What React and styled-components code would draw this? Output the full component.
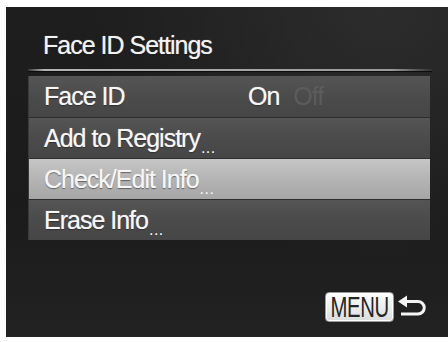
import React from "react";
import styled, { createGlobalStyle } from "styled-components";

const GlobalStyle = createGlobalStyle`
  html, body {
    margin: 0;
    padding: 0;
    background: #ffffff;
  }
  body {
    font-family: "Liberation Sans", Arial, sans-serif;
  }
`;

const items = [
  { label: "Face ID", value: true },
  { label: "Add to Registry", dots: true },
  { label: "Check/Edit Info", dots: true, selected: true },
  { label: "Erase Info", dots: true },
];

export const App = () => {
  return (
    <>
      <GlobalStyle />
      <Screen>
        <Title>
          <Text>Face ID Settings</Text>
        </Title>
        <Divider />
        <Menu>
          {items.map((item, index) => (
            <Row key={index} selected={item.selected}>
              <Label>
                <Text>{item.label}</Text>
                {item.dots && <Dots>...</Dots>}
              </Label>
              {item.value && (
                <Values>
                  <Text>On</Text>
                  <Off>Off</Off>
                </Values>
              )}
            </Row>
          ))}
        </Menu>
        <Footer>
          <MenuKey>
            <KeyText>MENU</KeyText>
          </MenuKey>
          <svg width="30" height="24" viewBox="0 0 30 24">
            <polygon points="0,6.5 9,0.5 9,12.5" fill="#f4f4f4" />
            <path
              d="M8 6.5 H20 A6.25 6.25 0 0 1 20 19 H3"
              fill="none"
              stroke="#f4f4f4"
              strokeWidth="3"
            />
          </svg>
        </Footer>
      </Screen>
    </>
  );
};

const Screen = styled.div`
  margin: 7px 0 0 6px;
  width: 442px;
  height: 330px;
  box-sizing: border-box;
  background:
    radial-gradient(ellipse at 85% 0%, #2c2c2c 0%, rgba(44, 44, 44, 0) 55%),
    linear-gradient(to bottom, #1e1e1e, #1b1b1b 60%, #222222);
  display: flex;
  flex-direction: column;
  overflow: hidden;
`;

const Title = styled.div`
  height: 62px;
  box-sizing: border-box;
  padding: 15px 0 0 37px;
  display: flex;
  align-items: center;
  color: #f2f2f2;
  font-size: 25px;
`;

const Text = styled.span`
  letter-spacing: -1px;
  text-shadow: 0 0 1px rgba(255, 255, 255, 0.6), 0 1px 1px rgba(0, 0, 0, 0.5);
`;

const Divider = styled.div`
  margin-left: 22px;
  width: 404px;
  height: 2px;
  background: linear-gradient(
    to right,
    rgba(160, 160, 160, 0.2),
    #b4b4b4 4%,
    #9a9a9a 90%,
    rgba(120, 120, 120, 0.1)
  );
  box-shadow: 0 1px 1px #0c0c0c;
`;

const Menu = styled.div`
  margin: 5px 0 0 22px;
  width: 402px;
  display: flex;
  flex-direction: column;
`;

const Row = styled.div`
  height: 41px;
  box-sizing: border-box;
  padding-left: 15px;
  display: flex;
  align-items: center;
  color: #f6f6f6;
  font-size: 25px;
  border-top: 1px solid #2e2e2e;
  border-left: 1px solid #3a3a3a;
  background: ${(props) =>
    props.selected
      ? "linear-gradient(to bottom, #c6c6c6, #b4b4b4 50%, #a6a6a6)"
      : "linear-gradient(to bottom, #555555, #4b4b4b 50%, #464646)"};

  &:first-child {
    border-top: none;
  }
`;

const Label = styled.div`
  width: 204px;
  display: flex;
  align-items: baseline;
`;

const Dots = styled.span`
  font-size: 16px;
  letter-spacing: 0.5px;
  margin-left: 1px;
  transform: translateY(6px);
  display: inline-block;
`;

const Values = styled.div`
  display: flex;
  align-items: baseline;
  gap: 14px;
`;

const Off = styled.span`
  color: #5c5c5c;
  letter-spacing: -1px;
`;

const Footer = styled.div`
  margin-top: auto;
  margin-bottom: 15px;
  padding-right: 20px;
  display: flex;
  justify-content: flex-end;
  align-items: center;
  gap: 4px;
`;

const MenuKey = styled.div`
  width: 69px;
  height: 30px;
  box-sizing: border-box;
  background: linear-gradient(to bottom, #ffffff, #dcdcdc);
  border: 1px solid #9a9a9a;
  border-radius: 4px;
  box-shadow: inset 0 0 0 1px #ffffff;
  display: flex;
  align-items: center;
  justify-content: center;
  overflow: hidden;
`;

const KeyText = styled.span`
  display: inline-block;
  font-size: 29px;
  line-height: 30px;
  color: #262626;
  transform: scaleX(0.7);
  letter-spacing: -0.5px;
`;

export default App;
